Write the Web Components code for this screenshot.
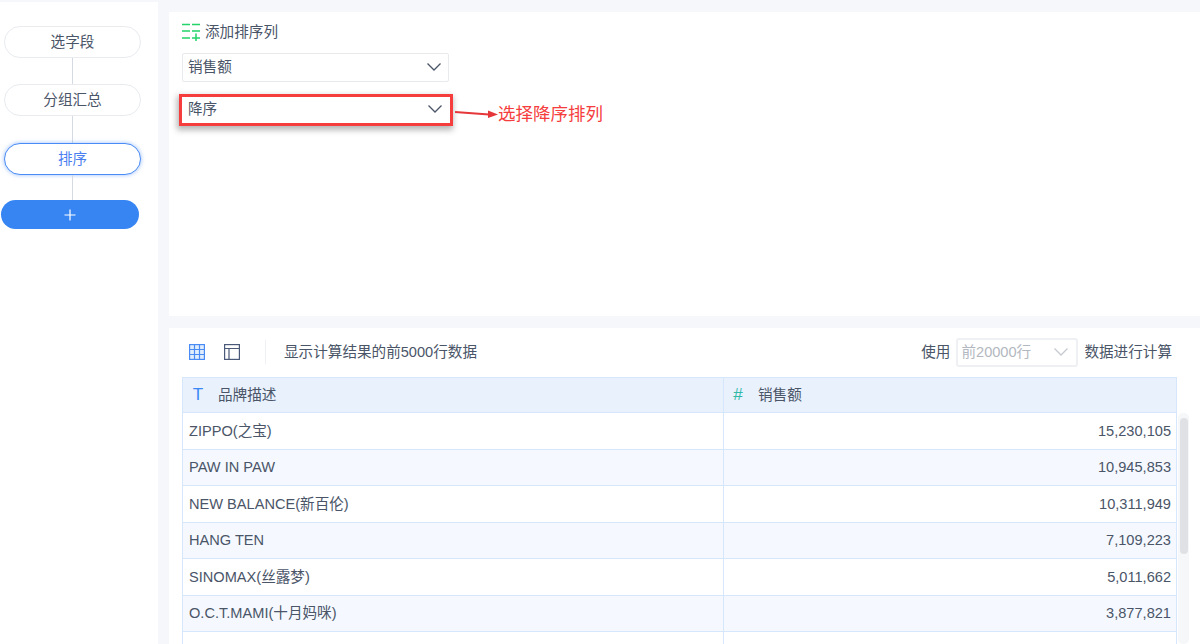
<!DOCTYPE html>
<html lang="zh"><head><meta charset="utf-8"><title>排序</title>
<style>
html,body{margin:0;padding:0;height:644px;overflow:hidden;background:#f5f7fa}
body{font:14.6px/20px "Liberation Sans","Noto Sans CJK SC",sans-serif;color:#4a5568}
</style></head><body>
<app-shell>
  <step-list slot="side"></step-list>
  <sort-panel slot="top"></sort-panel>
  <data-preview slot="bottom"></data-preview>
</app-shell>
<script>
const FONT='"Liberation Sans","Noto Sans CJK SC",sans-serif';
const chevron=(c)=>`<svg width="16" height="10" viewBox="0 0 16 10" fill="none"><path d="M1.5 1.5 8 8l6.5-6.5" stroke="${c}" stroke-width="1.3"/></svg>`;
class AppShell extends HTMLElement{constructor(){super();this.attachShadow({mode:'open'}).innerHTML=`<style>
:host{display:grid;grid-template-columns:158px 1fr;column-gap:11px;height:642px;margin-top:2px;width:1200px;overflow:hidden}
.side{background:#fff;min-height:0}
.main{display:grid;grid-template-rows:304px 316px;row-gap:12px;padding-top:10px;min-width:0}
</style><div class="side"><slot name="side"></slot></div><div class="main"><slot name="top"></slot><slot name="bottom"></slot></div>`}}
class StepList extends HTMLElement{constructor(){super();this.attachShadow({mode:'open'}).innerHTML=`<style>
:host{display:flex;flex-direction:column;align-items:flex-start;padding:24px 0 0 4px;font:14.6px/20px ${FONT}}
.s{box-sizing:border-box;width:137px;height:32px;border:1px solid #e9ebef;border-radius:16px;display:flex;align-items:center;justify-content:center;color:#4a5568;background:#fff}
.on{border:1.5px solid #4a8cf5;color:#4a7ff0;box-shadow:0 0 4px rgba(74,140,245,.55)}
.l{width:1px;height:26px;background:#d5dae2;margin-left:68px}
.l2{height:27px}.l3{height:25px}
.add{box-sizing:border-box;width:138px;height:29px;margin-left:-3px;border-radius:15px;background:#3785f3;display:flex;align-items:center;justify-content:center}
</style><div class="s">选字段</div><div class="l"></div><div class="s">分组汇总</div><div class="l l2"></div><div class="s on">排序</div><div class="l l3"></div>
<div class="add"><svg width="12" height="12" viewBox="0 0 12 12"><path d="M6 .5v11M.5 6h11" stroke="#fff" stroke-width="1.2"/></svg></div>`}}
class SelectBox extends HTMLElement{constructor(){super();this.attachShadow({mode:'open'}).innerHTML=`<style>
:host{display:flex;box-sizing:border-box;align-items:center;justify-content:space-between;width:267px;height:29px;border:1px solid #e8eaee;border-radius:2px;background:#fff;padding:0 6px 1px 5px;font:14.6px/20px ${FONT};color:#4a5568}
:host([red]){height:26px;width:268px;border:0;border-radius:0;padding:0 7px 2px 6px;outline:3.5px solid #f53d3d;box-shadow:-1px 3px 6px 4px rgba(70,70,70,.4)}
:host([disabled]){width:122px;height:29px;color:#b3b8c0;border:2px solid #eef0f3;border-radius:3px;padding:0 7px 1px 3px}
</style><slot></slot>${chevron('#4a5568')}`;
 if(this.hasAttribute('disabled')) this.shadowRoot.querySelector('path').setAttribute('stroke','#c5c9d0');}}
class SortPanel extends HTMLElement{constructor(){super();this.attachShadow({mode:'open'}).innerHTML=`<style>
:host{display:block;position:relative;background:#fff;padding:11px 13px 0;font:14.6px/20px ${FONT};color:#4a5568}
.h{display:flex;align-items:center;gap:5px;height:18px;margin-bottom:12px}
.r{margin:15px 0 0 0}
.note{position:absolute;left:286px;top:90px;display:flex;align-items:center;color:#f53d3d;font-size:17.5px;line-height:24px}
</style><div class="h"><svg width="18" height="18" viewBox="0 0 18 18" fill="none" stroke="#22d46a" stroke-width="1.5"><path d="M0 1.5h8M10 1.5h8M0 8h8M10 8h8M0 15h8M10 15h8M14 10.5v7.5" /></svg><span>添加排序列</span></div>
<select-box>销售额</select-box><select-box red class="r">降序</select-box>
<div class="note"><svg width="43" height="12" viewBox="0 0 43 12"><path d="M0 4 34 6.5" stroke="#e5373a" stroke-width="2"/><path d="M33 2.5 43 6.5 33 10z" fill="#e5373a"/></svg><span>选择降序排列</span></div>`}}
const ROWS=[['ZIPPO(之宝)','15,230,105'],['PAW IN PAW','10,945,853'],['NEW BALANCE(新百伦)','10,311,949'],['HANG TEN','7,109,223'],['SINOMAX(丝露梦)','5,011,662'],['O.C.T.MAMI(十月妈咪)','3,877,821'],['','']];
class DataPreview extends HTMLElement{constructor(){super();this.attachShadow({mode:'open'}).innerHTML=`<style>
:host{display:block;position:relative;background:#fff;font:14.6px/20px ${FONT};color:#4a5568;overflow:hidden}
.bar{display:flex;align-items:center;height:49px;padding:0 28px 1px 20px;box-sizing:border-box}
.bar svg{display:block}.i2{margin-left:19px}
.sep{width:1px;height:24px;background:#eef0f3;margin:0 18px 0 25px}
.right{margin-left:auto;display:flex;align-items:center;gap:6px}
.t{margin-left:13px;width:995px;border:1px solid #d6e6fb;border-bottom:0;box-sizing:border-box}
.row{display:grid;grid-template-columns:541px 1fr;height:36.5px;box-sizing:border-box;border-bottom:1px solid #d6e6fb;align-items:center}
.row:nth-child(odd){background:#f5f9ff}
.row>div{padding:0 5px 0 6px;height:100%;display:flex;align-items:center;box-sizing:border-box}
.row>div:first-child{border-right:1px solid #d6e6fb}
.row>div:last-child{justify-content:flex-end}
.head{height:35px;background:#e9f1fd!important}
.head>div{gap:14px;padding-left:9px!important}
.head>div:last-child{justify-content:flex-start;padding-left:8px!important}
.T{color:#3b87f5;font-size:17px;width:12px;text-align:center}
.H{color:#2fb8a6;font-size:17px;width:12px;text-align:center}
.sb{position:absolute;left:1009px;top:85px;width:11px;height:231px;background:#f6f7f8;border-radius:5px}
.th{margin:5px auto 0;width:8px;height:136px;background:#dfe1e5;border-radius:4px}
</style>
<div class="bar">
<svg width="16" height="16" viewBox="0 0 16 16" fill="none" stroke="#4a8cf5" stroke-width="1.2"><rect x=".6" y=".6" width="14.8" height="14.8" fill="#e3eefd"/><path d="M5.5 .6v14.8M10.5 .6v14.8M.6 5.5h14.8M.6 10.5h14.8"/></svg>
<svg class="i2" width="16" height="16" viewBox="0 0 16 16" fill="none" stroke="#4a5a78" stroke-width="1.2"><rect x=".6" y=".6" width="14.8" height="14.8"/><path d="M.6 4.5h14.8M5 4.5v10.9"/></svg>
<div class="sep"></div><span>显示计算结果的前5000行数据</span>
<div class="right"><span>使用</span><select-box disabled>前20000行</select-box><span>数据进行计算</span></div></div>
<div class="t"><div class="row head"><div><span class="T">T</span><span>品牌描述</span></div><div><span class="H">#</span><span>销售额</span></div></div>
${ROWS.map(r=>`<div class="row"><div>${r[0]}</div><div>${r[1]}</div></div>`).join('')}</div>
<div class="sb"><div class="th"></div></div>`}}
customElements.define('app-shell',AppShell);
customElements.define('step-list',StepList);
customElements.define('select-box',SelectBox);
customElements.define('sort-panel',SortPanel);
customElements.define('data-preview',DataPreview);
</script></body></html>
